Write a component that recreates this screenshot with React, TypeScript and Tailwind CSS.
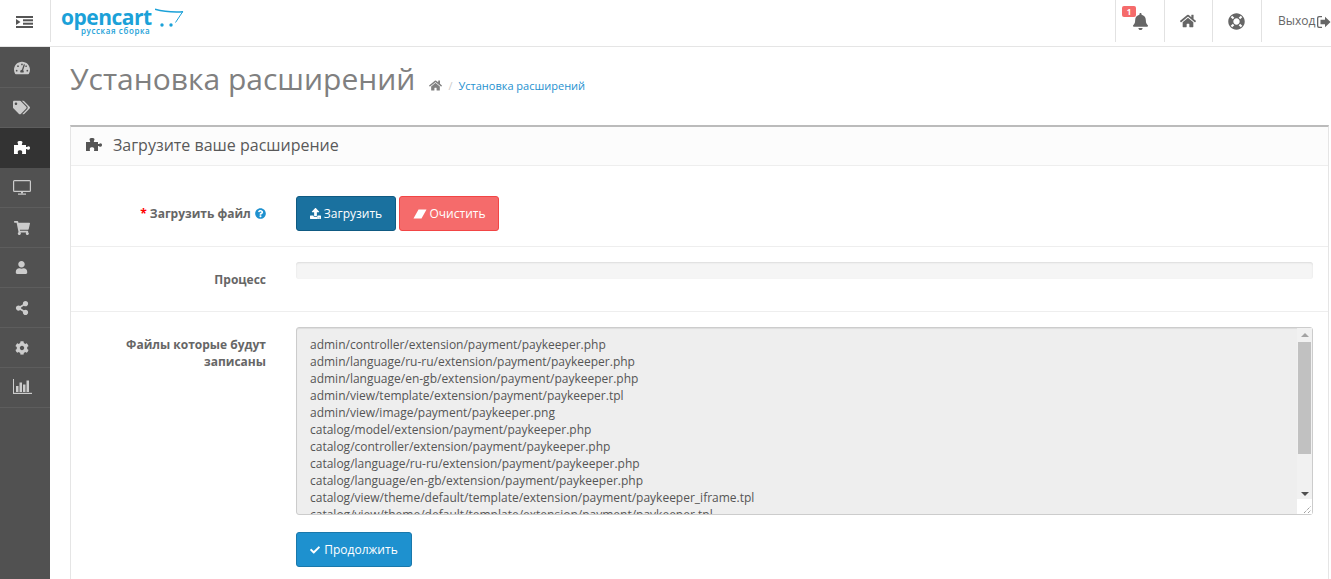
import { FaBell, FaHome, FaLifeRing, FaTachometerAlt, FaTags, FaShoppingCart, FaUser, FaShareAlt, FaCog, FaUpload, FaQuestionCircle, FaCheck } from "react-icons/fa";

type IconProps = { size?: number; color?: string; className?: string };

function PuzzleIcon({ size = 16, color = "currentColor", className }: IconProps) {
  return (
    <svg className={className} width={size} height={size} viewBox="0 0 16 16" fill={color}>
      <path d="M0 5H4C4.5 4 3.5 3.5 3.5 2C3.5 .5 8.5 .5 8.5 2C8.5 3.5 7.5 4 8 5H12V7C13 7.5 13.5 6.3 14.5 6.3C16.5 6.3 16.5 9.7 14.5 9.7C13.5 9.7 13 8.5 12 9V14H8C8 13 8.5 12.5 8 11C7.5 10 4.5 10 4 11C3.5 12.5 4 13 4 14H0Z" />
    </svg>
  );
}

function MonitorIcon({ color = "currentColor", className }: IconProps) {
  return (
    <svg className={className} width="18" height="15" viewBox="0 0 18 15" fill={color}>
      <path fillRule="evenodd" d="M1.5 0H16.5A1.5 1.5 0 0 1 18 1.5V10.5A1.5 1.5 0 0 1 16.5 12H1.5A1.5 1.5 0 0 1 0 10.5V1.5A1.5 1.5 0 0 1 1.5 0ZM1.2 1.2V10.8H16.8V1.2Z" />
      <rect x="8" y="12" width="2" height="1.5" />
      <rect x="5" y="13.5" width="8" height="1.2" />
    </svg>
  );
}

function BarsIcon({ color = "currentColor", className }: IconProps) {
  return (
    <svg className={className} width="19" height="15" viewBox="0 0 19 15" fill={color}>
      <rect x="0" y="0" width="1" height="15" />
      <rect x="0" y="13.8" width="19" height="1.2" />
      <rect x="3" y="7" width="2.5" height="6" />
      <rect x="6.5" y="3.5" width="2.5" height="9.5" />
      <rect x="10" y="5.5" width="2.5" height="7.5" />
      <rect x="13.5" y="1.5" width="2.5" height="11.5" />
    </svg>
  );
}

function EraserIcon({ color = "currentColor", className }: IconProps) {
  return (
    <svg className={className} width="14" height="10" viewBox="0 0 14 10" fill={color}>
      <path d="M5.5 .5H13.5L8.5 9.5H.5Z" />
    </svg>
  );
}

function IndentIcon({ className }: IconProps) {
  return (
    <svg className={className} width="17" height="12" viewBox="0 0 17 12" fill="#555">
      <rect width="17" height="2" />
      <rect x="7" y="3.3" width="10" height="2" />
      <rect x="7" y="6.7" width="10" height="2" />
      <rect y="10" width="17" height="2" />
      <path d="M0 3V9L4.5 6Z" />
    </svg>
  );
}

function ExitIcon({ className }: IconProps) {
  return (
    <svg className={className} width="14" height="12" viewBox="0 0 14 12" fill="#666">
      <path fillRule="evenodd" d="M2 0H5V1.3H2.2A.9.9 0 0 0 1.3 2.2V9.8A.9.9 0 0 0 2.2 10.7H5V12H2A2 2 0 0 1 0 10V2A2 2 0 0 1 2 0Z" />
      <path d="M3.5 3.7H8V.8L13.5 6L8 11.2V8.3H3.5Z" />
    </svg>
  );
}

const menuIcons = [
  { node: <FaTachometerAlt size={16} color="#ccc" /> },
  { node: <FaTags size={17} color="#ccc" /> },
  { node: <PuzzleIcon size={16} color="#fff" />, active: true },
  { node: <MonitorIcon color="#ccc" /> },
  { node: <FaShoppingCart size={16} color="#ccc" /> },
  { node: <FaUser size={13} color="#ccc" /> },
  { node: <FaShareAlt size={14} color="#ccc" /> },
  { node: <FaCog size={14} color="#ccc" /> },
  { node: <BarsIcon color="#ccc" className="mb-[2px] ml-[1px]" /> },
];

const files = [
  "admin/controller/extension/payment/paykeeper.php",
  "admin/language/ru-ru/extension/payment/paykeeper.php",
  "admin/language/en-gb/extension/payment/paykeeper.php",
  "admin/view/template/extension/payment/paykeeper.tpl",
  "admin/view/image/payment/paykeeper.png",
  "catalog/model/extension/payment/paykeeper.php",
  "catalog/controller/extension/payment/paykeeper.php",
  "catalog/language/ru-ru/extension/payment/paykeeper.php",
  "catalog/language/en-gb/extension/payment/paykeeper.php",
  "catalog/view/theme/default/template/extension/payment/paykeeper_iframe.tpl",
  "catalog/view/theme/default/template/extension/payment/paykeeper.tpl",
].join("\n");

function Logo() {
  return (
    <div className="relative ml-[10px] h-[46px] w-[125px]">
      <span className="absolute left-0 top-[7px] text-[21px] leading-[20px] font-bold tracking-[-0.5px] text-[#1ba1d8]">
        opencart
      </span>
      <span className="absolute left-[20px] top-[26px] text-[8px] leading-[9px] font-semibold tracking-[0.6px] text-[#1ba1d8]">
        русская сборка
      </span>
      <svg className="absolute left-[94px] top-[8px]" width="30" height="20" viewBox="0 0 30 20">
        <path d="M0 1.2C8 3.5 18 4.4 28 3.8" fill="none" stroke="#1ba1d8" strokeWidth="1.4" />
        <path d="M27.6 3.8L20.5 14.5" fill="none" stroke="#1ba1d8" strokeWidth="1" />
        <circle cx="7" cy="17" r="1.7" fill="#1ba1d8" />
        <circle cx="16" cy="17" r="1.7" fill="#1ba1d8" />
      </svg>
    </div>
  );
}

function HeaderItem({ children, className }: { children: React.ReactNode; className: string }) {
  return (
    <div className={`relative flex h-[42px] items-center justify-center border-l border-[#e2e2e2] ${className}`}>
      {children}
    </div>
  );
}

function Scrollbar() {
  return (
    <div className="absolute bottom-[1px] right-[1px] top-[1px] flex w-[15px] flex-col bg-[#f1f1f1]">
      <div className="flex h-[14px] items-center justify-center">
        <div className="h-0 w-0 border-x-[4px] border-b-[4px] border-x-transparent border-b-[#a3a3a3]" />
      </div>
      <div className="mx-[1px] h-[112px] bg-[#c1c1c1]" />
      <div className="flex flex-1 items-end justify-center pb-[3px]">
        <div className="h-0 w-0 border-x-[4px] border-t-[4px] border-x-transparent border-t-[#505050]" />
      </div>
      <div className="relative h-[15px] bg-white">
        <svg className="absolute bottom-0 right-0" width="9" height="9" viewBox="0 0 9 9" stroke="#777" strokeWidth="1" strokeDasharray="1 1">
          <path d="M1 8L8 1M5 8L8 5" />
        </svg>
      </div>
    </div>
  );
}

export default function App() {
  return (
    <div className="h-[579px] w-[1331px] overflow-hidden bg-white text-[12px] text-[#666] [font-family:'Open_Sans',sans-serif]">
      <header className="flex h-[47px] items-start border-b border-[#e5e5e5] bg-white">
        <div className="flex h-[42px] w-[51px] items-center justify-center border-r border-[#e2e2e2]">
          <IndentIcon className="-ml-[1px] mt-[1px]" />
        </div>
        <Logo />
        <div className="ml-auto flex">
          <HeaderItem className="w-[49px]">
            <span className="absolute left-[6px] top-[6px] z-10 flex h-[11px] w-[14px] items-center justify-center rounded-[2px] bg-[#f56b6b] text-[8px] leading-none font-bold text-white">
              1
            </span>
            <FaBell size={17} color="#666" className="mt-[1px]" />
          </HeaderItem>
          <HeaderItem className="w-[48px]">
            <FaHome size={16} color="#666" className="-ml-[2px]" />
          </HeaderItem>
          <HeaderItem className="w-[49px]">
            <FaLifeRing size={17} color="#666" className="-ml-[2px]" />
          </HeaderItem>
          <HeaderItem className="w-[70px] justify-start overflow-hidden pl-4">
            <span className="text-[12px] text-[#666]">Выход</span>
            <ExitIcon className="ml-[2px] mt-[1px] shrink-0" />
          </HeaderItem>
        </div>
      </header>

      <div className="flex h-[532px]">
        <nav className="w-[50px] shrink-0 bg-[#515151] pt-[1px]">
          {menuIcons.map(({ node, active }, i) => (
            <div
              key={i}
              className={`flex h-[40px] items-center justify-center border-b pr-[7px] ${
                active ? "border-[#333] bg-[#333]" : "border-[#5d5d5d]"
              }`}
            >
              {node}
            </div>
          ))}
        </nav>

        <main className="min-w-0 flex-1 pl-5 pr-[2px]">
          <div className="flex h-[78px] items-start">
            <h1 className="mt-[13px] text-[30px] leading-[37px] font-normal text-[#808080]">Установка расширений</h1>
            <div className="ml-[14px] mt-[31px] flex items-center text-[11px] leading-[15px]">
              <FaHome size={13} color="#808080" />
              <span className="mx-[6px] text-[#ccc]">/</span>
              <span className="text-[#1e91cf]">Установка расширений</span>
            </div>
          </div>

          <section className="h-[460px] border-x border-t-2 border-x-[#e5e5e5] border-t-[#bbb]">
            <div className="flex h-[39px] items-center border-b border-[#eee] bg-[#fcfcfc] pb-[2px] pl-[15px] text-[16px] text-[#595959]">
              <PuzzleIcon size={16} color="#555" className="mr-[11px]" />
              Загрузите ваше расширение
            </div>

            <div className="flex h-[81px] items-start border-b border-[#eee] pt-[30px]">
              <label className="h-[35px] w-[195px] text-right leading-[35px] font-bold text-[#666]">
                <span className="text-[#f00]">* </span>Загрузить файл{" "}
                <FaQuestionCircle size={11} color="#1e91cf" className="ml-[1px] inline align-[-1px]" />
              </label>
              <div className="ml-[30px] flex gap-[3px]">
                <button className="flex h-[35px] w-[100px] items-center justify-center rounded-[3px] border border-[#0f5a82] bg-[#1a719f] text-white">
                  <FaUpload size={11} className="mr-[3px]" />
                  Загрузить
                </button>
                <button className="flex h-[35px] w-[100px] items-center justify-center rounded-[3px] border border-[#f24545] bg-[#f56b6b] text-white">
                  <EraserIcon color="#fff" className="mr-[3px]" />
                  Очистить
                </button>
              </div>
            </div>

            <div className="flex h-[65px] border-b border-[#eee] pt-[15px]">
              <label className="mt-[9px] w-[195px] text-right leading-[17px] font-bold text-[#666]">Процесс</label>
              <div className="ml-[30px] mr-[15px] h-[17px] flex-1 rounded-[3px] bg-[#f5f5f5] shadow-[inset_0_1px_2px_rgba(0,0,0,0.1)]" />
            </div>

            <div className="flex pt-[15px]">
              <label className="mt-[9px] w-[195px] text-right leading-[17px] font-bold text-[#666]">
                Файлы которые будут записаны
              </label>
              <div className="ml-[30px] mr-[15px] flex-1">
                <div className="relative h-[188px]">
                  <textarea
                    readOnly
                    value={files}
                    wrap="off"
                    className="block h-full w-full resize-none overflow-hidden rounded-[3px] border border-[#ccc] bg-[#eee] px-[13px] py-[8px] text-[12px] leading-[17px] text-[#555] shadow-[inset_0_1px_1px_rgba(0,0,0,0.075)] outline-none"
                  />
                  <Scrollbar />
                </div>
                <button className="mt-[17px] flex h-[35px] w-[116px] items-center justify-center rounded-[3px] border border-[#1978ab] bg-[#1e91cf] text-white">
                  <FaCheck size={10} className="mr-[4px]" />
                  Продолжить
                </button>
              </div>
            </div>
          </section>
        </main>
      </div>
    </div>
  );
}
